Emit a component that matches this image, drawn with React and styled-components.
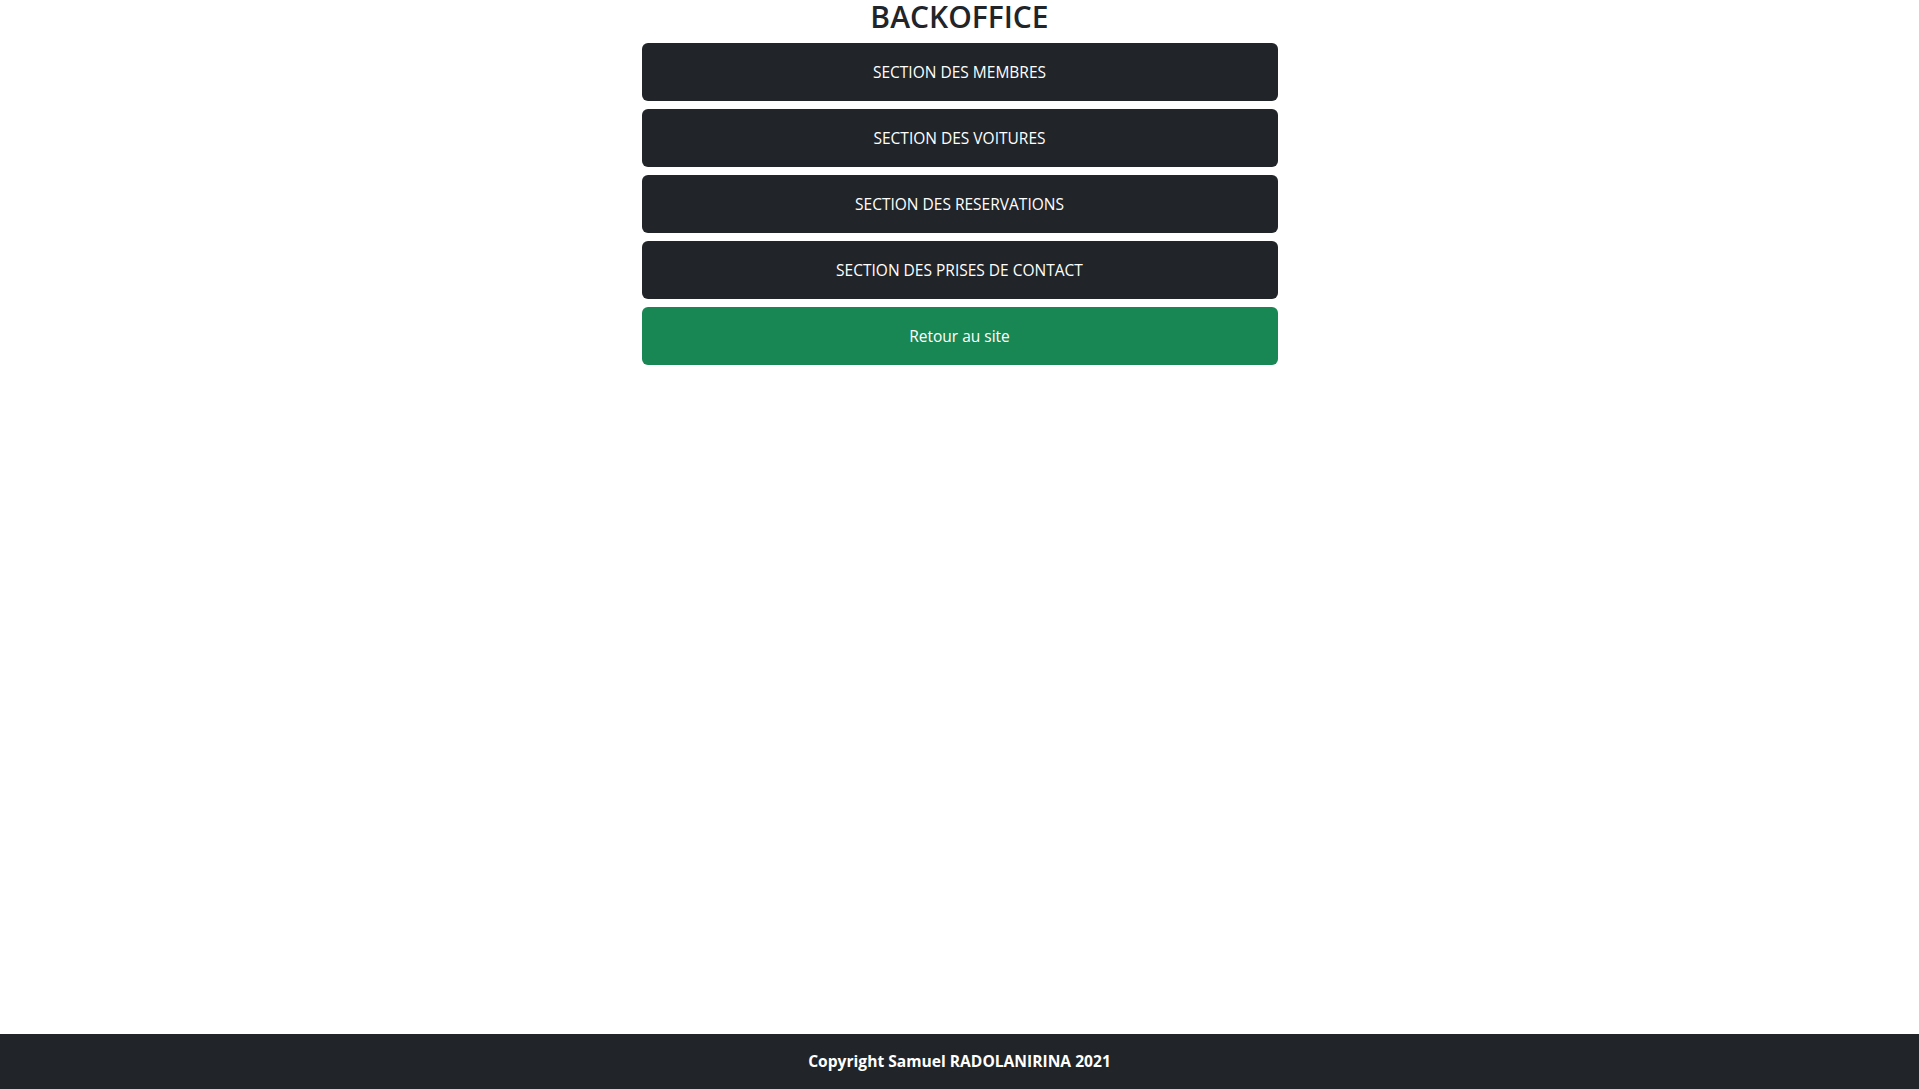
import React from "react";
import styled, { createGlobalStyle } from "styled-components";

const GlobalStyle = createGlobalStyle`
  * { box-sizing: border-box; }
  html, body { margin: 0; padding: 0; }
  body {
    font-family: "Open Sans", "Noto Sans", sans-serif;
    font-size: 16px;
    line-height: 1.5;
    color: #212529;
    background: #fff;
  }
`;

const Page = styled.div`
  display: flex;
  flex-direction: column;
  min-height: 100vh;
`;

const Main = styled.main`
  flex: 1;
  width: 1320px;
  margin: 0 auto;
  padding: 0 12px;
`;

const Column = styled.div`
  width: 636px;
  margin: 0 auto;
  display: flex;
  flex-direction: column;
  gap: 8px;
`;

const Title = styled.h2`
  margin: 0;
  text-align: center;
  font-size: 30px;
  font-weight: 600;
  line-height: 33px;
  height: 35px;
`;

const MenuButton = styled.a`
  display: flex;
  align-items: center;
  justify-content: center;
  height: 58px;
  padding-top: 2px;
  border-radius: 6px;
  background: ${(p) => (p.$variant === "success" ? "#198754" : "#212529")};
  color: #fff;
  font-size: 15.5px;
  text-decoration: none;
  cursor: pointer;
`;

const Footer = styled.footer`
  height: 55px;
  background: #212529;
  color: #fff;
  display: flex;
  align-items: center;
  justify-content: center;
  font-weight: 700;
  font-size: 15.6px;
`;

const sections = [
  "SECTION DES MEMBRES",
  "SECTION DES VOITURES",
  "SECTION DES RESERVATIONS",
  "SECTION DES PRISES DE CONTACT",
];

export default function App() {
  return (
    <Page>
      <GlobalStyle />
      <Main>
        <Column>
          <Title>BACKOFFICE</Title>
          {sections.map((label) => (
            <MenuButton key={label}>{label}</MenuButton>
          ))}
          <MenuButton $variant="success">Retour au site</MenuButton>
        </Column>
      </Main>
      <Footer>Copyright Samuel RADOLANIRINA 2021</Footer>
    </Page>
  );
}
